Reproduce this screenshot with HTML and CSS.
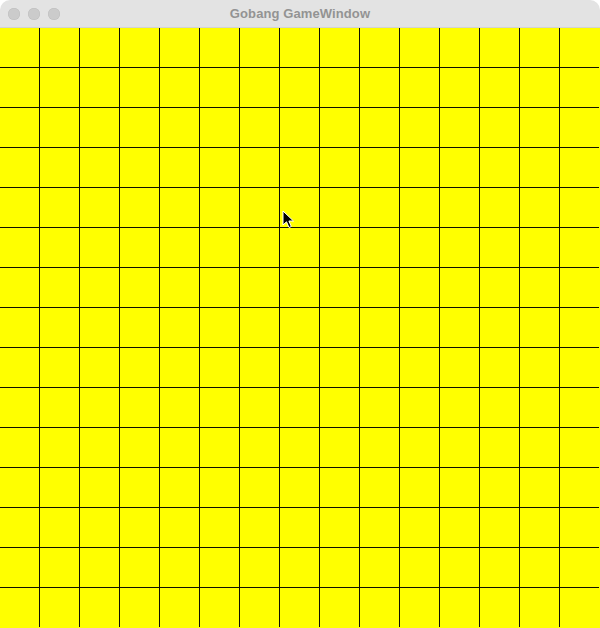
FILE: index.html
```html
<!DOCTYPE html>
<html>
<head>
<meta charset="utf-8">
<title>Gobang GameWindow</title>
<link rel="stylesheet" href="styles.css">
</head>
<body>
<div class="window">
  <div class="titlebar">
    <div class="lights">
      <span class="light"></span>
      <span class="light"></span>
      <span class="light"></span>
    </div>
    <div class="title">Gobang GameWindow</div>
  </div>
  <div class="board">
    <div class="grid"></div>
    <svg class="cursor" width="14" height="20" viewBox="0 0 14 20">
      <path d="M1 1 L1 15 L4.5 11.8 L7 17.5 L9.3 16.5 L6.9 11 L11.5 11 Z" fill="#000" stroke="#fff" stroke-width="1" stroke-linejoin="round"/>
    </svg>
  </div>
</div>
</body>
</html>
```
FILE: styles.css
```css
html, body {
  margin: 0;
  padding: 0;
  background: #ffffff;
  overflow: hidden;
}
.window {
  width: 600px;
  height: 628px;
  display: flex;
  flex-direction: column;
  border-radius: 10px 10px 0 0;
  overflow: hidden;
  font-family: "Liberation Sans", Arial, sans-serif;
}
.titlebar {
  height: 28px;
  flex: 0 0 28px;
  box-sizing: border-box;
  background: #e3e3e3;
  border-bottom: 1px solid #d2d2d2;
  position: relative;
  display: flex;
  align-items: center;
  justify-content: center;
}
.lights {
  position: absolute;
  left: 8px;
  top: 8px;
  display: flex;
  gap: 8px;
}
.light {
  width: 12px;
  height: 12px;
  border-radius: 50%;
  background: #cbcbcb;
  box-shadow: inset 0 0 0 0.5px #bdbdbd;
}
.title {
  font-size: 13px;
  font-weight: bold;
  color: #939393;
  letter-spacing: 0.1px;
}
.board {
  flex: 1;
  background: #ffff00;
  position: relative;
}
.grid {
  width: 599px;
  height: 599px;
  background-image:
    linear-gradient(to right, transparent 39px, #111100 39px, #111100 40px, transparent 40px),
    linear-gradient(to bottom, transparent 39px, #111100 39px, #111100 40px, transparent 40px);
  background-size: 40px 40px;
}
.cursor {
  position: absolute;
  left: 282px;
  top: 182px;
}
```
